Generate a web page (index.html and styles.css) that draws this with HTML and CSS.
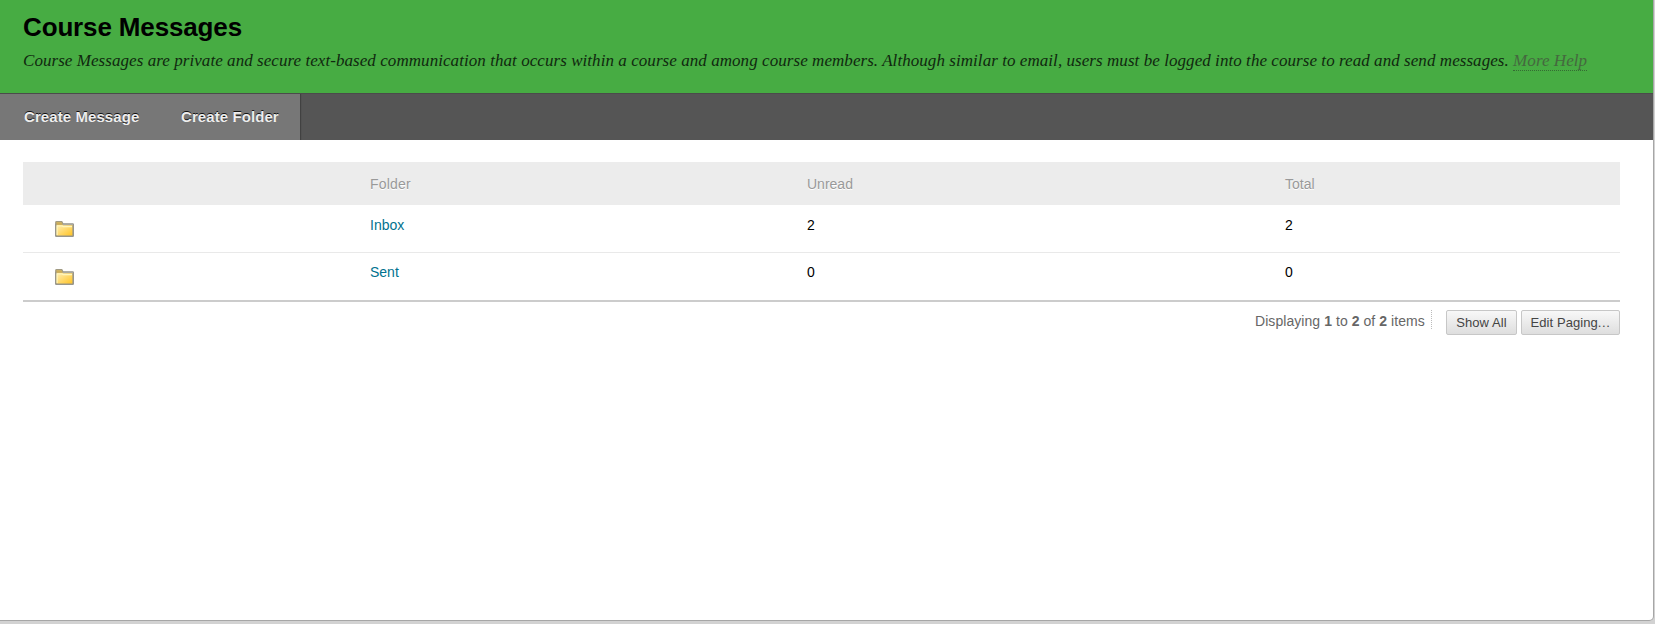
FILE: index.html
```html
<!DOCTYPE html>
<html lang="en">
<head>
<meta charset="utf-8">
<title>Course Messages</title>
<link rel="stylesheet" href="styles.css">
</head>
<body>
<svg class="defs" width="0" height="0" aria-hidden="true">
  <defs>
    <linearGradient id="gold" x1="0" y1="0" x2="1" y2="1"><stop offset="0.1" stop-color="#ffedb0"/><stop offset="0.9" stop-color="#ffc62d"/></linearGradient>
    <symbol id="folder" viewBox="0 0 19 17">
      <path d="M.8 5V1.2Q.8 .7 1.5 .7H6.8L7.8 2.5V5Z" fill="#dcb957" stroke="#a09a82" stroke-width="1.2"/>
      <rect x="0.8" y="3" width="17.4" height="12.2" rx=".5" fill="url(#gold)" stroke="#98968c" stroke-width="1.6"/>
      <path d="M1.5 3H7.4" stroke="#d8b24c" stroke-width="1.5"/>
      <path d="M2.1 14V5H7L8.2 5.7H17" fill="none" stroke="#fff6ba" stroke-width="1.2"/>
      <path d="M8 3.5H18" stroke="#aaa99f" stroke-width="1.4"/>
    </symbol>
  </defs>
</svg>
<main class="page">
  <header class="header">
    <h1 class="title">Course Messages</h1>
    <p class="intro">Course Messages are private and secure text-based communication that occurs within a course and among course members. Although similar to email, users must be logged into the course to read and send messages. <a class="help">More Help</a></p>
  </header>
  <nav class="actions">
    <a class="action">Create Message</a><a class="action action-last">Create Folder</a>
  </nav>
  <section class="content">
    <div class="row row-head"><span></span><span class="folder-head">Folder</span><span>Unread</span><span>Total</span></div>
    <div class="row"><svg class="icon"><use href="#folder"/></svg><a class="link">Inbox</a><span>2</span><span>2</span></div>
    <div class="row row-last"><svg class="icon"><use href="#folder"/></svg><a class="link">Sent</a><span>0</span><span>0</span></div>
    <div class="paging">
      <span class="count">Displaying <b>1</b> to <b>2</b> of <b>2</b> items</span>
      <button class="button show">Show All</button>
      <button class="button edit">Edit Paging<span class="dots">...</span></button>
    </div>
  </section>
</main>
</body>
</html>
```
FILE: styles.css
```css
* { box-sizing: border-box; }
body { margin: 0; height: 624px; overflow: hidden; background: #d2d2d2; font: 14px/18px "Liberation Sans", Arial, sans-serif; color: #000; }
.defs { display: block; }
.page { width: 1653px; height: 620px; background: #fff; border-radius: 0 0 4px 0; overflow: hidden; box-shadow: 0 0 0 1px #a6a6a6; }
.header { height: 93px; padding: 12px 0 0 23px; background: #47ac43; }
.title { margin: 0; font-size: 26px; line-height: 30px; font-weight: bold; letter-spacing: -.14px; }
.intro { margin: 8px 0 0; font: italic 17px/21px "Liberation Serif", Georgia, serif; letter-spacing: .06px; white-space: nowrap; color: #10280f; }
.help { display: inline-block; line-height: 19px; color: #45683f; border-bottom: 1px dotted #356b33; }
.actions { display: flex; height: 47px; background: #555; border-top: 1px solid #4b4b4b; }
.action { width: 161px; padding: 14px 0 0 24px; background: #777; color: #eee; font-size: 15px; font-weight: bold; text-shadow: 0 -1px 0 #111; letter-spacing: .08px; }
.action-last { width: 139px; padding-left: 20px; box-shadow: 1px 0 1px #414141; clip-path: inset(0 -3px 0 0); }
.content { width: 1597px; margin: 22px 0 0 23px; }
.row { display: grid; grid-template-columns: 347px 437px 478px 335px; height: 48px; padding-top: 11px; border-bottom: 1px solid #e9e9e9; }
.row-head { height: 43px; padding-top: 13px; background: #ececec; border: 0; color: #999; text-shadow: 0 1px 0 #fff; }
.folder-head { letter-spacing: .2px; }
.row-last { height: 49px; padding-top: 10px; border-bottom: 2px solid #ccc; }
.icon { width: 19px; height: 17px; margin: 5px 0 0 32px; }
.row-last .icon { margin-top: 6px; }
.link { color: #01728f; }
.paging { display: flex; justify-content: flex-end; padding-top: 8px; color: #666; }
.count { height: 19px; line-height: 22px; width: 177px; margin-right: 14px; border-right: 1px dotted #bbb; white-space: nowrap; letter-spacing: .06px; }
.button { height: 25px; padding: 0; border: 1px solid #c7c7c7; border-radius: 2px; background: linear-gradient(#f8f8f8, #dedede); color: #444; font: 13px/23px "Liberation Sans", Arial, sans-serif; letter-spacing: .08px; }
.show { width: 71px; margin-right: 4px; }
.edit { width: 99px; }
.dots { letter-spacing: .6px; }
```
